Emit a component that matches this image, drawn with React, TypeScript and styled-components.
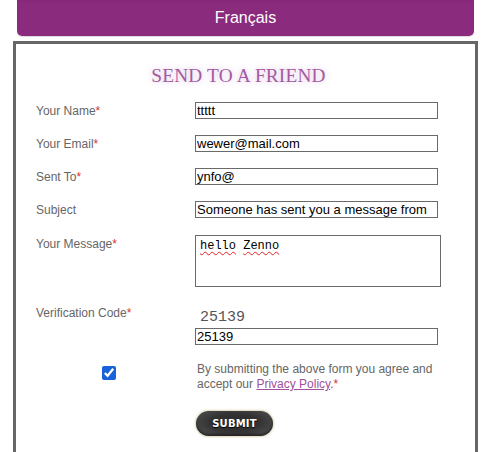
import React from "react";
import styled, { createGlobalStyle } from "styled-components";

const Global = createGlobalStyle`
  html, body { margin: 0; padding: 0; background: #fff; }
  body { font-family: "Liberation Sans", Arial, sans-serif; }
`;

const Page = styled.div`
  padding: 0 6px 0 13px;
  width: 484px;
  box-sizing: border-box;
`;

const LangBar = styled.div`
  margin: 0 4px;
  height: 36px;
  background: linear-gradient(#86277a 0px, #8b2b7e 4px, #8b2b7e 100%);
  border-radius: 0 0 5px 5px;
  color: #fff;
  font-size: 16px;
  display: flex;
  align-items: center;
  justify-content: center;
  box-shadow: 0 1px 1px rgba(0, 0, 0, 0.15);
`;

const Box = styled.div`
  margin-top: 5px;
  border: 3px solid #666;
  border-bottom: none;
  padding: 22px 0 40px 20px;
`;

const Title = styled.h2`
  margin: 0 0 16px;
  text-align: center;
  padding-right: 34px;
  font-family: "Liberation Serif", "Times New Roman", serif;
  font-weight: normal;
  font-size: 19.3px;
  line-height: 20px;
  color: #a45aa0;
  text-shadow: 0 0 6px rgba(200, 160, 210, 0.7);
  letter-spacing: 0.2px;
`;

const Row = styled.div<{ $gap?: number }>`
  display: grid;
  grid-template-columns: 159px 1fr;
  align-items: start;
  margin-bottom: ${(p) => p.$gap ?? 16}px;
`;

const Label = styled.label`
  font-size: 12px;
  line-height: 14px;
  color: #666;
  padding-top: 2px;
`;

const Req = styled.span`
  color: #d63333;
`;

const TextInput = styled.input`
  box-sizing: border-box;
  width: 243px;
  height: 17px;
  border: 1px solid #6a6a6a;
  padding: 0 1px;
  margin: 0;
  font-family: "Liberation Sans", Arial, sans-serif;
  font-size: 13px;
  color: #000;
  background: #fff;
  outline: none;
`;

const MessageBox = styled.div`
  box-sizing: border-box;
  width: 246px;
  height: 52px;
  border: 1px solid #6a6a6a;
  padding: 3px 4px;
  font-family: "Liberation Mono", "Courier New", monospace;
  font-size: 12px;
  line-height: 14px;
  color: #000;
`;

const Misspelled = styled.span`
  text-decoration: underline wavy #e02020;
  text-decoration-thickness: 1px;
  text-underline-offset: 2px;
`;

const CodeCol = styled.div`
  display: flex;
  flex-direction: column;
  gap: 1px;
  padding-top: 5px;
`;

const Code = styled.div`
  font-family: "Liberation Mono", "Courier New", monospace;
  font-size: 15px;
  line-height: 18px;
  color: #555;
  padding-left: 5px;
`;

const CheckCell = styled.div`
  padding: 4px 0 0 66px;
  display: flex;
`;

const Check = styled.input`
  width: 14px;
  height: 14px;
  margin: 0;
  accent-color: #1a62d8;
`;

const Agree = styled.p`
  margin: 0;
  padding-left: 2px;
  width: 245px;
  font-size: 12px;
  line-height: 15px;
  color: #666;
`;

const PolicyLink = styled.a`
  color: #a0509b;
  text-decoration: underline;
`;

const Submit = styled.button`
  width: 77px;
  height: 25px;
  margin-left: 1px;
  border: none;
  border-radius: 13px;
  background: radial-gradient(ellipse at 50% 45%, #2a2a2a 0%, #333 45%, #5a5a5a 100%);
  box-shadow: 0 0 2px 1px rgba(190, 180, 120, 0.55), inset 0 -2px 3px rgba(0, 0, 0, 0.5);
  color: #fff;
  font-family: "DejaVu Sans", Verdana, sans-serif;
  font-weight: bold;
  font-size: 10px;
  letter-spacing: 0.2px;
  text-shadow: 0 1px 1px #000;
  cursor: pointer;
  padding: 0;
`;

export default function App() {
  return (
    <Page>
      <Global />
      <LangBar>Français</LangBar>
      <Box>
        <Title>SEND TO A FRIEND</Title>
        <Row>
          <Label>
            Your Name<Req>*</Req>
          </Label>
          <TextInput defaultValue="ttttt" />
        </Row>
        <Row>
          <Label>
            Your Email<Req>*</Req>
          </Label>
          <TextInput defaultValue="wewer@mail.com" />
        </Row>
        <Row>
          <Label>
            Sent To<Req>*</Req>
          </Label>
          <TextInput defaultValue="ynfo@" />
        </Row>
        <Row $gap={17}>
          <Label>Subject</Label>
          <TextInput defaultValue="Someone has sent you a message from" />
        </Row>
        <Row $gap={17}>
          <Label>
            Your Message<Req>*</Req>
          </Label>
          <MessageBox role="textbox">
            <Misspelled>hello</Misspelled> <Misspelled>Zenno</Misspelled>
          </MessageBox>
        </Row>
        <Row $gap={17}>
          <Label>
            Verification Code<Req>*</Req>
          </Label>
          <CodeCol>
            <Code>25139</Code>
            <TextInput defaultValue="25139" />
          </CodeCol>
        </Row>
        <Row $gap={19}>
          <CheckCell>
            <Check type="checkbox" defaultChecked />
          </CheckCell>
          <Agree>
            By submitting the above form you agree and accept our{" "}
            <PolicyLink href="#">Privacy Policy</PolicyLink>
            <Req>.*</Req>
          </Agree>
        </Row>
        <Row>
          <div />
          <div>
            <Submit type="button">SUBMIT</Submit>
          </div>
        </Row>
      </Box>
    </Page>
  );
}
